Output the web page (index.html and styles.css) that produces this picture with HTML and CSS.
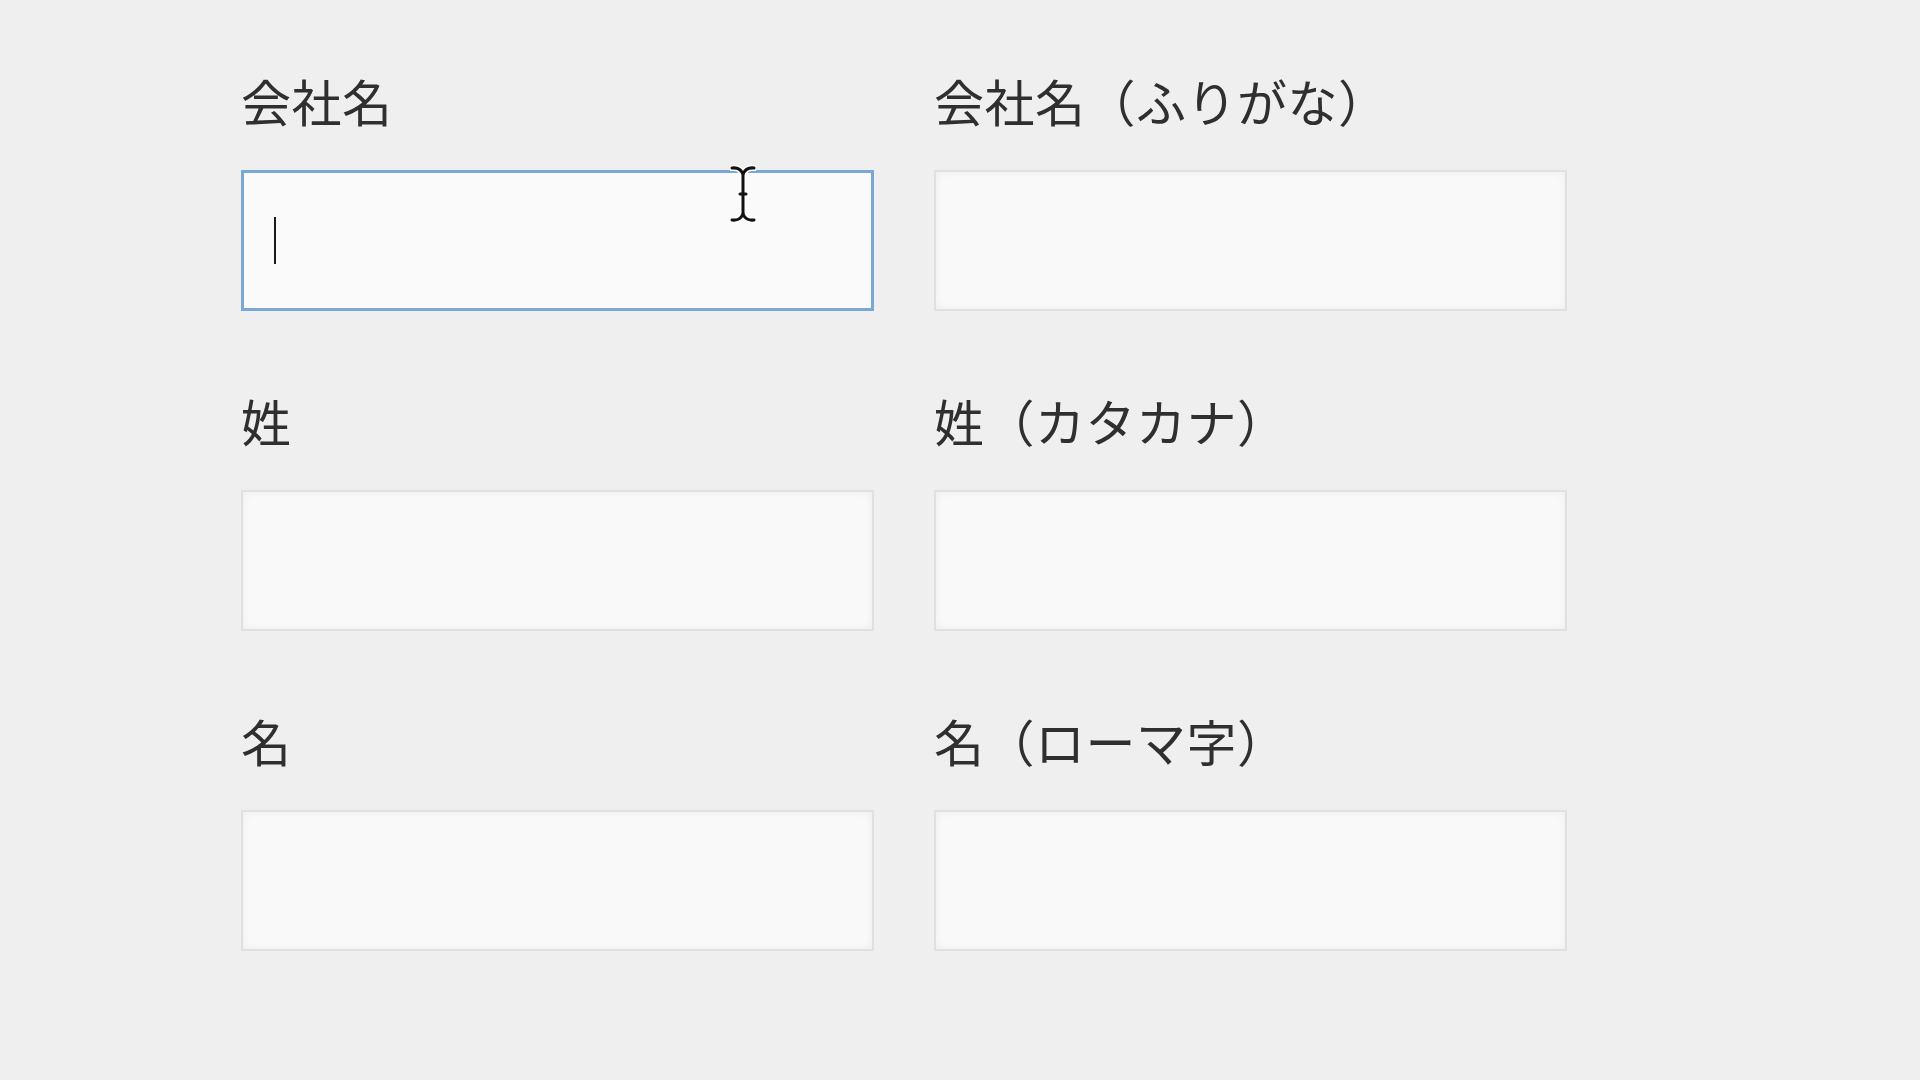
FILE: index.html
```html
<!DOCTYPE html>
<html lang="ja">
<head>
<meta charset="utf-8">
<title>フォーム</title>
<link rel="stylesheet" href="styles.css">
</head>
<body>
<main class="form">
  <div class="field">
    <div class="label">会社名</div>
    <div class="input focused">
      <span class="caret"></span>
      <svg class="ibeam" width="26" height="60" viewBox="0 0 26 60">
        <g fill="none" stroke-linecap="round">
          <g stroke="#fff" stroke-width="6">
            <path d="M2 4 Q10 3 13 10 Q16 3 24 4"/>
            <path d="M13 10 V50"/>
            <path d="M2 56 Q10 57 13 50 Q16 57 24 56"/>
            <path d="M10 30 H16"/>
          </g>
          <g stroke="#111" stroke-width="3">
            <path d="M2 4 Q10 3 13 10 Q16 3 24 4"/>
            <path d="M13 10 V50"/>
            <path d="M2 56 Q10 57 13 50 Q16 57 24 56"/>
            <path d="M10 30 H16"/>
          </g>
        </g>
      </svg>
    </div>
  </div>
  <div class="field">
    <div class="label">会社名（ふりがな）</div>
    <div class="input"></div>
  </div>
  <div class="field">
    <div class="label">姓</div>
    <div class="input"></div>
  </div>
  <div class="field">
    <div class="label">姓（カタカナ）</div>
    <div class="input"></div>
  </div>
  <div class="field">
    <div class="label">名</div>
    <div class="input"></div>
  </div>
  <div class="field">
    <div class="label">名（ローマ字）</div>
    <div class="input"></div>
  </div>
</main>
</body>
</html>
```

FILE: styles.css
```css
html, body {
  margin: 0;
  padding: 0;
}
body {
  width: 1920px;
  height: 1080px;
  overflow: hidden;
  background: #efefef;
  font-family: "Noto Sans CJK JP", "Noto Sans", sans-serif;
  color: #2f2f2f;
}
.form {
  display: grid;
  grid-template-columns: 633px 633px;
  column-gap: 60px;
  row-gap: 77px;
  padding: 68px 0 0 241px;
}
.field {
  display: flex;
  flex-direction: column;
}
.label {
  font-size: 50px;
  line-height: 64px;
  height: 64px;
  letter-spacing: 0.5px;
  white-space: nowrap;
}
.input {
  margin-top: 38px;
  height: 141px;
  box-sizing: border-box;
  background: #f9f9f9;
  border: 2px solid #e0e0e0;
  box-shadow: inset 0 0 8px rgba(0,0,0,0.05);
  position: relative;
  display: flex;
  align-items: center;
  padding-left: 31px;
}
.input.focused {
  border: 3px solid #7aa8d4;
  background: #fafafa;
  box-shadow: none;
  padding-left: 30px;
}
.caret {
  display: block;
  width: 2px;
  height: 47px;
  background: #1a1a1a;
}
.ibeam {
  position: absolute;
  left: 486px;
  top: -9px;
}
```
